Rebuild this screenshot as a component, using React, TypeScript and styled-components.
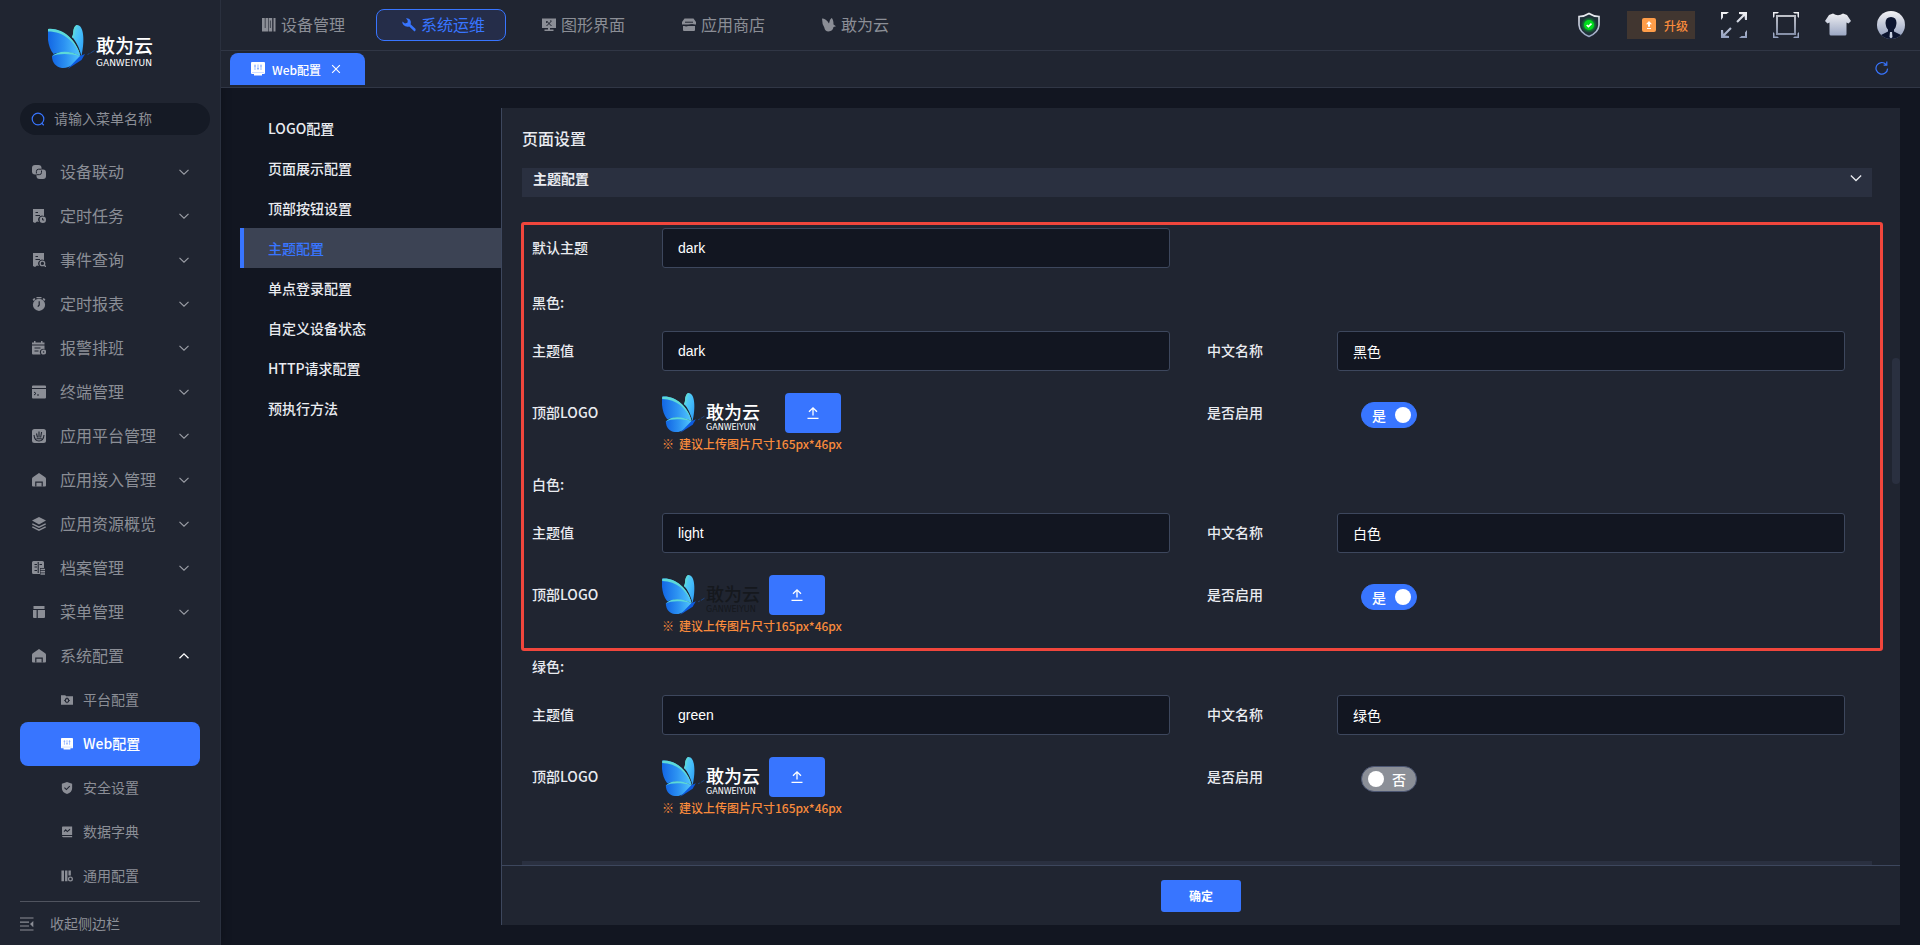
import React, { useId, useState } from 'react';
import styled, { createGlobalStyle } from 'styled-components';

const c = {
  bg: '#121621',
  panel: '#202531',
  line: '#303645',
  edge: '#3d475d',
  bar: '#2a3040',
  blue: '#3875ff',
  muted: '#8b8e96',
  text: '#e9ebf0',
  orange: '#f98b3c',
  red: '#f0463c',
};

const Global = createGlobalStyle`
  *, *::before, *::after { box-sizing: border-box; }
  body {
    margin: 0;
    background: ${c.bg};
    color: ${c.text};
    font-family: "Noto Sans CJK SC", "Noto Sans", sans-serif;
    font-size: 14px;
  }
  button, input { font: inherit; color: inherit; }
  button { border: 0; padding: 0; background: none; cursor: pointer; }
  a { color: inherit; text-decoration: none; }
  svg { display: block; flex: none; }
`;

/* ---------- icons ---------- */

const shapes: Record<string, React.ReactNode> = {
  link: (
    <>
      <rect x="0" y="0" width="9.5" height="9.5" rx="3" fill="currentColor" />
      <rect x="4.5" y="4.5" width="9.5" height="9.5" rx="3" fill="currentColor" />
      <path d="M9.5 4.200H6.600Q4.400 4.200 4.400 6.400V8.500M4.600 9.700H7.300Q9.500 9.700 9.500 7.500V5.500" fill="none" stroke={c.panel} strokeWidth="1" />
    </>
  ),
  task: (
    <>
      <path d="M1 0H12V7A4 4 0 0 0 7 13L5 12.4 3 14 1 13Z" fill="currentColor" />
      <path d="M3.5 3.5H6M3.5 6.5H8" stroke={c.panel} strokeWidth="1.1" />
      <circle cx="10.8" cy="10.8" r="3.2" fill="currentColor" />
      <path d="M10.6 9V11H12.2" fill="none" stroke={c.panel} />
    </>
  ),
  query: (
    <>
      <path d="M1 0H12V7A4 4 0 0 0 7 13L5 12.4 3 14 1 13Z" fill="currentColor" />
      <path d="M3.5 3.5H6M3.5 6.5H8" stroke={c.panel} strokeWidth="1.1" />
      <circle cx="10.4" cy="10.4" r="2.3" fill={c.panel} stroke="currentColor" strokeWidth="1.3" />
      <path d="M12 12L14 14" stroke="currentColor" strokeWidth="1.3" />
    </>
  ),
  timer: (
    <>
      <path d="M4.5 0H9.5V1.3H4.5ZM.6 2.6L2.2 1 3.6 2 1.6 4ZM13.4 2.6L11.8 1 10.4 2 12.4 4Z" fill="currentColor" />
      <circle cx="7" cy="7.8" r="6.1" fill="currentColor" />
      <path d="M7.2 4.3V8L5.8 9.6" fill="none" stroke={c.panel} strokeWidth="1.2" />
    </>
  ),
  shift: (
    <>
      <path d="M0 1.5H2V0H3.5V1.5H9V0H10.500V1.5H12.500V3.6H0ZM0 4.6H12.500V8A3.500 3.500 0 0 0 8.500 13.500H1Q0 13.500 0 12.500Z" fill="currentColor" />
      <path d="M2.500 7H8.500M2.500 10H6.500" stroke={c.panel} strokeWidth="1.1" />
      <circle cx="11.600" cy="11" r="2.600" fill="currentColor" />
      <circle cx="11.600" cy="11" r=".8" fill={c.panel} />
    </>
  ),
  terminal: (
    <>
      <path d="M1 .5H13Q14 .5 14 1.500V3H0V1.500Q0 .5 1 .5ZM0 4H14V12.500Q14 13.500 13 13.500H1Q0 13.500 0 12.500Z" fill="currentColor" />
      <path d="M2 7L4 8.500 2 10M5 10H7" fill="none" stroke={c.panel} />
    </>
  ),
  platform: (
    <>
      <rect width="14" height="14" rx="2.500" fill="currentColor" />
      <path d="M2 6Q2.500 12 7 12T12 6M4.500 4.500L5.500 8.500M7 2.500V8.500M9.600 3L8.600 8.500M4.500 9.800H9.800" fill="none" stroke={c.panel} strokeWidth="1.1" />
    </>
  ),
  home: (
    <>
      <path d="M7 0L13.200 4.200Q14 4.800 14 6V12.500Q14 13.500 13 13.500H1Q0 13.500 0 12.500V6Q0 4.800 .8 4.200Z" fill="currentColor" />
      <path d="M3.800 13.500V9.200H10.200V13.500" fill="none" stroke={c.panel} strokeWidth="1.200" />
    </>
  ),
  layers: (
    <>
      <path d="M7 0L14 3.600 7 7.400 0 3.600Z" fill="currentColor" />
      <path d="M.3 6.800L7 10.200 13.700 6.800M.3 9.800L7 13.200 13.700 9.800" fill="none" stroke="currentColor" strokeWidth="1.300" />
    </>
  ),
  archive: (
    <>
      <path d="M1.500 0H10.500Q12 0 12 1.500V7H8V13H1.500Q0 13 0 11.500V1.500Q0 0 1.500 0Z" fill="currentColor" />
      <path d="M2.500 3.500H5M2.500 6H5M7.500 3.500H10M6.200 1V12M2.500 9.500H5" stroke={c.panel} strokeWidth="1.100" />
      <path d="M8.500 8.500H13M8.500 10.700H13M8.500 12.900H13" stroke="currentColor" strokeWidth="1.500" />
    </>
  ),
  menu: <path d="M1.500 1H12.500V4H1.500ZM1 5H4.600V13H2Q1 13 1 12ZM5.800 5H13V12Q13 13 12 13H5.800Z" fill="currentColor" />,
  folderGear: (
    <>
      <path d="M0 1.500H5L6 2.500H14V12.500H0Z" fill="currentColor" />
      <circle cx="7" cy="7.500" r="2.100" fill="none" stroke={c.panel} strokeWidth="1.300" />
      <path d="M7 4.200V5.500M7 9.500V10.800M3.800 7.500H5M9 7.500H10.200" stroke={c.panel} strokeWidth="1.200" />
    </>
  ),
  web: (
    <>
      <path d="M1 0H13Q14 0 14 1V11Q14 12 13 12H11V13.500H3V12H1Q0 12 0 11V1Q0 0 1 0Z" fill="currentColor" />
      <path d="M4 2.500V8M7 2.500V8M10 2.500V8M3 4H5M6 6.500H8M9 4H11" stroke={c.blue} strokeWidth=".7" opacity=".7" />
      <path d="M1 10.600H13" stroke={c.blue} strokeWidth=".5" opacity=".5" />
    </>
  ),
  shield: (
    <>
      <path d="M7 0L13 2V7Q13 12 7 14 1 12 1 7V2Z" fill="currentColor" />
      <path d="M4 6.500L6.300 8.800 10.200 4.900" fill="none" stroke={c.panel} strokeWidth="1.300" />
    </>
  ),
  dict: (
    <>
      <path d="M2 .5H13V10.500H1.200V1.500Q1.200 .5 2 .5ZM1.200 11.700H13V13H2.500Q1.200 13 1.200 11.700Z" fill="currentColor" />
      <path d="M3.500 6.500L5.500 4.500 7.300 6.500 10.500 3.800" fill="none" stroke={c.panel} strokeWidth="1.200" />
    </>
  ),
  general: (
    <>
      <path d="M.5 .5H3.500V13H.5ZM4.700 .5H7.500V13H4.700ZM8.700 .5H11.500V6.500H8.700Z" fill="currentColor" />
      <circle cx="11" cy="10.500" r="2.200" fill={c.panel} stroke="currentColor" strokeWidth="1.500" />
    </>
  ),
  books: (
    <>
      <path d="M0 0H6V13.500H0ZM6.600 0H10.200V13.500H6.600ZM11.500 0H13.500V13.500H11.500Z" fill="currentColor" />
      <path d="M3.200 0V10M8.400 2.500V10" stroke={c.panel} strokeWidth=".7" />
    </>
  ),
  wrench: <path d="M4 .3Q7.800 0 8.800 3.500 9 5 8.600 6.200L13.600 11Q14 12.500 12.500 13.500L7.200 8.500Q3.800 9.300 1.500 7 .2 5.500 .3 3.500L3 5.600 5.400 4.800 5.800 2.800Z" fill="currentColor" />,
  screen: (
    <>
      <path d="M0 .5H14V10H8V11.500H11.500V13H2.500V11.500H6V10H0Z" fill="currentColor" />
      <path d="M4.500 3L9.500 8M9 3.500L4.500 8M8 3H9.500M4.500 5L5 3" stroke={c.panel} strokeWidth="1" />
    </>
  ),
  store: (
    <>
      <path d="M2.500 .5H11.500L14 4V6.500H0V4ZM1 8H13V12Q13 13 12 13H2Q1 13 1 12Z" fill="currentColor" />
      <path d="M3 4.200H11M1.500 7.300Q4 8.700 7 7.300T12.500 7.300" fill="none" stroke={c.panel} />
    </>
  ),
  bird: <path d="M0 .5Q4 .5 7 5.500 7.500 1.500 9.500 0 11.500 1 11.500 6.500L14 8.200 11.500 9Q11 13 6.500 13.500 3 13.500 2.300 9.500 0 6 0 .5Z" fill="currentColor" />,
  collapse: (
    <>
      <path d="M0 1H13.500M0 5.200H9M0 9H9M0 13H13.500" stroke="currentColor" strokeWidth="1.200" />
      <path d="M13.300 4V10.300L10 7.100Z" fill="currentColor" />
    </>
  ),
  search: (
    <>
      <circle cx="7" cy="7" r="5.800" fill="none" stroke={c.blue} strokeWidth="1.200" />
      <path d="M10.500 11L12.800 13.200" stroke={c.blue} strokeWidth="1.200" />
    </>
  ),
  down: <path d="M2.500 4.800L7 9.200 11.500 4.800" fill="none" stroke="currentColor" strokeWidth="1.100" />,
  up: <path d="M2.500 9.200L7 4.800 11.500 9.200" fill="none" stroke="currentColor" strokeWidth="1.300" />,
  close: <path d="M2.500 2.500L11.500 11.500M11.500 2.500L2.500 11.500" stroke="currentColor" strokeWidth="1.300" />,
  refresh: (
    <path d="M12.600 7.600A5.800 5.800 0 1 1 11 3.300M11.800 .6V4.200H8.600" fill="none" stroke={c.blue} strokeWidth="1.200" />
  ),
  upload: <path d="M7 9.600V2M3 5.800L7 1.800 11 5.800M1.500 12.300H12.500" fill="none" stroke="#fff" strokeWidth="1.300" />,
};

const Icon = ({ name, size = 14 }: { name: string; size?: number }) => (
  <svg width={size} height={size} viewBox="0 0 14 14" aria-hidden="true">{shapes[name]}</svg>
);

const Silver = ({ id }: { id: string }) => (
  <linearGradient id={id} x1="0" y1="0" x2="0" y2="26" gradientUnits="userSpaceOnUse">
    <stop offset="0" stopColor="#f3f3f5" />
    <stop offset="1" stopColor="#929fbe" />
  </linearGradient>
);

const ShieldStatus = () => (
  <svg width="24" height="26" viewBox="0 0 24 26">
    <defs>
      <Silver id="sv1" />
      <radialGradient id="glow"><stop offset=".5" stopColor="#00c92a" /><stop offset="1" stopColor="#00c92a" stopOpacity="0" /></radialGradient>
    </defs>
    <path d="M12 1.500Q16.500 4.500 22 4.500V13Q21.500 20.500 12 24.500 2.500 20.500 2 13V4.500Q7.500 4.500 12 1.500Z" fill="#1f3239" stroke="url(#sv1)" strokeWidth="1.600" />
    <circle cx="12" cy="13" r="8" fill="url(#glow)" opacity=".7" />
    <circle cx="12" cy="13" r="5" fill="#00dc1c" />
    <path d="M9.700 13L11.400 14.600 14.500 11.600" fill="none" stroke="#fff" strokeWidth="1.600" />
  </svg>
);

const ExpandIcon = () => (
  <svg width="26" height="26" viewBox="0 0 26 26">
    <defs><Silver id="sv2" /></defs>
    <path d="M0 0H8L5.500 2H2V5.500L0 8ZM18 0H26V8H24L23.500 4 16.800 10.700 15.300 9.200 22 2.500 18 2ZM26 18V26H18L20.500 24H24V20.500ZM0 18H2L2.500 22 9.200 15.300 10.700 16.800 4 23.500 8 24V26H0Z" fill="url(#sv2)" />
  </svg>
);

const FrameIcon = () => (
  <svg width="26" height="26" viewBox="0 0 26 26">
    <defs><Silver id="sv3" /></defs>
    <path d="M0 0H6L4.500 1.500H1.500V4.500L0 6ZM20 0H26V6L24.500 4.500V1.500H21.500ZM26 20V26H20L21.500 24.500H24.500V21.500ZM0 20L1.500 21.500V24.500H4.500L6 26H0Z" fill="url(#sv3)" />
    <path d="M4 4H22V22H4Z" fill="none" stroke="url(#sv3)" strokeWidth="2" opacity=".8" />
  </svg>
);

const ShirtIcon = () => (
  <svg width="26" height="26" viewBox="0 0 26 26">
    <defs><Silver id="sv4" /></defs>
    <path d="M8 1.500Q13 5 18 1.500L22 3 26 9 23.500 11.500 21.500 10.500V22Q21.500 23.500 20 23.500H6Q4.500 23.500 4.500 22V10.500L2.500 11.500 0 9 4 3Z" fill="url(#sv4)" />
  </svg>
);

const AvatarIcon = () => (
  <svg width="28" height="28" viewBox="0 0 28 28">
    <defs>
      <Silver id="sv5" />
      <clipPath id="round"><circle cx="14" cy="14" r="14" /></clipPath>
    </defs>
    <g clipPath="url(#round)">
      <rect width="28" height="28" fill="url(#sv5)" />
      <path d="M14 6Q19.500 6 19.500 12 19 17 17 18.500V20.500L24 24V28H4V24L11 20.500V18.500Q9 17 8.500 12 8.500 6 14 6Z" fill="#0c1530" />
      <path d="M13 21H15L15.500 26 14 27.500 12.500 26Z" fill="#c5cee0" />
    </g>
  </svg>
);

const UpgradeIcon = () => (
  <svg width="14" height="14" viewBox="0 0 14 14">
    <rect width="14" height="14" rx="2" fill="#ff9d49" />
    <path d="M7 3L10 6.300H8V8.800H6V6.300H4ZM5 10H9V11.100H5Z" fill="#fff" />
  </svg>
);

const Butterfly = ({ height }: { height: number }) => {
  const id = useId();
  return (
    <svg width={height === 44 ? 48 : 44} height={height} viewBox="0 0 48 44" aria-hidden="true">
      <defs>
        <linearGradient id={id + 'a'} x1="0" y1=".6" x2="1" y2=".6">
          <stop offset="0" stopColor="#1266e4" /><stop offset=".5" stopColor="#2c92f2" /><stop offset="1" stopColor="#52c8fd" />
        </linearGradient>
        <linearGradient id={id + 'b'} x1="0" y1="0" x2="1" y2="1">
          <stop offset="0" stopColor="#62dce4" /><stop offset=".5" stopColor="#45befb" /><stop offset="1" stopColor="#2a97f4" />
        </linearGradient>
      </defs>
      <path d="M29 0C36 0 37 16 33.500 31 31 22 28 16 24 12 26 8 25 1 29 0Z" fill={`url(#${id}b)`} />
      <path d="M29 .5Q25.500 3 26 8 26 10.500 24.500 12.500" fill="none" stroke="#5cd9d8" strokeWidth="1.500" />
      <path d="M0 4C14 3 28 14 32.500 31 22 26 12 27 5.500 29 0 22 -1 12 0 4Z" fill={`url(#${id}a)`} />
      <path d="M0 4C14 2.500 28 14 32.500 31 27 17 16 6.500 0 6.500Z" fill="#5cd9d8" />
      <path d="M4 31C10 26 22 26 32.500 31 28 38 22 43.500 14 43 8 42 4 38 4 31Z" fill={`url(#${id}a)`} />
      <path d="M4 31.500C10 25 22 25.500 32.500 31 22 28.500 10 28 4 31.500Z" fill="#5cd9d8" />
      <path d="M19.500 44L32 31 37 29 33.500 35Z" fill="#0d5be0" />
      <path d="M39.500 29.500L41.500 28.500M42.500 28L46.500 25.500" stroke="#1b4f9f" strokeWidth=".8" />
    </svg>
  );
};

/* ---------- brand ---------- */

const BrandBox = styled.div<{ $large?: boolean; $wide?: boolean; $ink: string }>`
  display: flex;
  color: ${(p) => p.$ink};
  width: ${(p) => (p.$large ? 'auto' : p.$wide ? '123px' : '107px')};
`;
const BrandWords = styled.div<{ $large?: boolean }>`
  display: flex;
  flex-direction: column;
  padding-top: ${(p) => (p.$large ? 11 : 10)}px;
  white-space: nowrap;
`;
const BrandName = styled.span<{ $large?: boolean }>`
  font-family: "Liberation Sans", "Noto Sans CJK SC", sans-serif;
  font-size: ${(p) => (p.$large ? 19 : 18)}px;
  line-height: ${(p) => (p.$large ? 22 : 20)}px;
  font-weight: 500;
`;
const BrandLatin = styled.span<{ $large?: boolean }>`
  font-family: "DejaVu Sans", sans-serif;
  font-size: ${(p) => (p.$large ? 9 : 8)}px;
  line-height: 10px;
`;
const Brand = ({ large, wide, ink = '#fff' }: { large?: boolean; wide?: boolean; ink?: string }) => (
  <BrandBox $large={large} $wide={wide} $ink={ink}>
    <Butterfly height={large ? 44 : 40} />
    <BrandWords $large={large}>
      <BrandName $large={large}>敢为云</BrandName>
      <BrandLatin $large={large}>GANWEIYUN</BrandLatin>
    </BrandWords>
  </BrandBox>
);

/* ---------- shell ---------- */

const Shell = styled.div`
  display: flex;
  height: 100vh;
  overflow: hidden;
`;
const Sidebar = styled.aside`
  flex: none;
  width: 221px;
  display: flex;
  flex-direction: column;
  background: ${c.panel};
  border-right: 1px solid #2a303e;
  box-shadow: 0 0 10px rgba(0, 0, 0, 0.25);
`;
const BrandArea = styled.div`
  padding: 25px 0 34px 48px;
`;
const Search = styled.label`
  display: flex;
  align-items: center;
  gap: 9px;
  height: 32px;
  margin: 0 10px 15px 20px;
  padding: 0 11px;
  border-radius: 16px;
  background: #151a25;
`;
const SearchInput = styled.input`
  flex: 1;
  min-width: 0;
  border: 0;
  outline: 0;
  padding: 0 0 2px;
  background: none;
  &::placeholder { color: ${c.muted}; opacity: 1; }
`;
const Menu = styled.nav`
  flex: 1;
  min-height: 0;
  overflow: hidden;
  padding: 0 20px;
`;
const ItemText = styled.span`
  padding-bottom: 2px;
`;
const MenuItem = styled.button<{ $open?: boolean }>`
  display: flex;
  align-items: center;
  gap: 14px;
  width: 100%;
  height: 44px;
  padding: 0 9px 0 12px;
  color: ${c.muted};
  font-size: 16px;
  text-align: left;
  & > svg:last-child { margin-left: auto; color: ${(p) => (p.$open ? '#fff' : '#9da0a8')}; }
`;
const SubItem = styled.a<{ $active?: boolean }>`
  display: flex;
  align-items: center;
  gap: 10px;
  height: 44px;
  padding-left: 41px;
  border-radius: 8px;
  color: ${(p) => (p.$active ? '#fff' : c.muted)};
  background: ${(p) => (p.$active ? c.blue : 'transparent')};
  font-weight: ${(p) => (p.$active ? 500 : 400)};
`;
const Collapse = styled.button`
  display: flex;
  align-items: center;
  gap: 16px;
  height: 44px;
  margin: 0 20px;
  border-top: 1px solid #50545f;
  color: ${c.muted};
`;

const Main = styled.div`
  flex: 1;
  min-width: 0;
  display: flex;
  flex-direction: column;
`;
const TopBar = styled.header`
  display: flex;
  align-items: center;
  justify-content: space-between;
  height: 51px;
  padding: 0 15px;
  background: ${c.panel};
  border-bottom: 1px solid ${c.line};
`;
const TopNav = styled.nav`
  display: flex;
  gap: 10px;
`;
const TopLink = styled.a<{ $active?: boolean }>`
  display: flex;
  align-items: center;
  gap: 5px;
  height: 32px;
  padding: 0 20px 0 25px;
  border: 1px solid ${(p) => (p.$active ? c.blue : 'transparent')};
  border-radius: 8px;
  background: ${(p) => (p.$active ? '#252d49' : 'transparent')};
  color: ${(p) => (p.$active ? c.blue : c.muted)};
  font-size: 16px;
`;
const Tools = styled.div`
  display: flex;
  align-items: center;
  gap: 26px;
`;
const ToolButton = styled.button`
  display: block;
`;
const Upgrade = styled.button`
  display: flex;
  align-items: center;
  gap: 8px;
  height: 28px;
  padding: 0 7px 0 15px;
  background: #413630;
  color: ${c.orange};
  font-size: 12px;
  font-weight: 500;
`;
const TabBar = styled.div`
  display: flex;
  align-items: center;
  justify-content: space-between;
  height: 37px;
  padding: 0 31px 2px 9px;
  background: ${c.panel};
  border-bottom: 1px solid ${c.line};
`;
const Tab = styled.div`
  display: flex;
  align-items: center;
  align-self: flex-end;
  width: 135px;
  height: 32px;
  padding: 0 23px 0 21px;
  border-radius: 8px 8px 0 0;
  background: ${c.blue};
  color: #fff;
  font-size: 12px;
  font-weight: 500;
`;
const TabTitle = styled.span`
  margin: 0 auto 0 7px;
`;

const Workspace = styled.main`
  flex: 1;
  min-height: 0;
  display: flex;
  padding: 20px 20px 20px 19px;
`;
const SectionNav = styled.nav`
  flex: none;
  width: 261px;
`;
const SectionLink = styled.a<{ $active?: boolean }>`
  display: block;
  height: 40px;
  line-height: 40px;
  padding-left: 24px;
  border-left: 4px solid ${(p) => (p.$active ? c.blue : 'transparent')};
  background: ${(p) => (p.$active ? '#3c4354' : 'transparent')};
  color: ${(p) => (p.$active ? c.blue : c.text)};
  font-weight: 500;
`;
const Panel = styled.section`
  flex: 1;
  min-width: 0;
  display: flex;
  flex-direction: column;
  background: ${c.panel};
  border-left: 1px solid ${c.edge};
`;
const PanelTitle = styled.h1`
  margin: 0;
  padding: 18px 20px;
  font-size: 16px;
  line-height: 24px;
  font-weight: 500;
`;
const Scroll = styled.div`
  position: relative;
  flex: 1;
  min-height: 0;
  overflow: hidden;
  padding: 0 28px 0 20px;
`;
const ScrollThumb = styled.i`
  position: absolute;
  top: 190px;
  right: 0;
  width: 8px;
  height: 126px;
  border-radius: 4px;
  background: ${c.bar};
`;
const Accordion = styled.button<{ $next?: boolean }>`
  display: flex;
  justify-content: space-between;
  align-items: flex-start;
  width: 100%;
  height: 29px;
  margin-top: ${(p) => (p.$next ? 40 : 0)}px;
  padding: 0 8px 0 11px;
  background: ${c.bar};
  font-weight: 700;
  line-height: 20px;
  & > svg { margin-top: 2px; }
`;
const Highlight = styled.div`
  position: relative;
  margin-top: 31px;
  &::after {
    content: '';
    position: absolute;
    inset: -6px -11px -12px -1px;
    border: 3px solid ${c.red};
    border-radius: 3px;
    pointer-events: none;
  }
`;
const Row = styled.div<{ $gap?: number }>`
  display: grid;
  grid-template-columns: 1fr 1fr;
  margin-bottom: ${(p) => p.$gap ?? 0}px;
`;
const Field = styled.div`
  display: grid;
  grid-template-columns: 130px 1fr;
  align-items: start;
  padding: 0 27px 0 10px;
`;
const Label = styled.label`
  font-weight: 500;
  line-height: 38px;
`;
const TextBox = styled.input`
  width: 100%;
  height: 40px;
  padding: 0 15px;
  border: 1px solid ${c.edge};
  border-radius: 3px;
  outline: 0;
  background: ${c.bg};
  color: #fff;
  font-family: "Liberation Sans", "Noto Sans CJK SC", sans-serif;
`;
const Group = styled.section`
  padding-top: 16px;
`;
const GroupTitle = styled.h2`
  margin: 0 0 18px;
  padding-left: 10px;
  font-size: 14px;
  line-height: 22px;
  font-weight: 500;
`;
const UploadLine = styled.div`
  display: flex;
`;
const UploadButton = styled.button`
  display: flex;
  align-items: center;
  justify-content: center;
  width: 56px;
  height: 40px;
  border-radius: 4px;
  background: ${c.blue};
`;
const Hint = styled.p`
  margin: 0;
  padding-bottom: 2px;
  color: ${c.orange};
  font-size: 12px;
  line-height: 22px;
  font-weight: 500;
`;
const HintMark = styled.span`
  margin-right: 5px;
`;
const SwitchBox = styled.span<{ $on: boolean }>`
  position: relative;
  display: flex;
  flex-direction: ${(p) => (p.$on ? 'row' : 'row-reverse')};
  align-items: center;
  justify-content: space-between;
  width: 56px;
  height: 26px;
  margin: 9px 0 0 24px;
  padding: ${(p) => (p.$on ? '0 5px 0 10px' : '0 10px 0 6px')};
  border: 1px solid ${(p) => (p.$on ? c.blue : '#4c5672')};
  border-radius: 13px;
  background: ${(p) => (p.$on ? c.blue : '#8b8f97')};
  color: #fff;
  font-weight: 500;
  line-height: 24px;
`;
const SwitchInput = styled.input`
  position: absolute;
  inset: 0;
  width: 100%;
  height: 100%;
  margin: 0;
  opacity: 0;
  cursor: pointer;
`;
const Knob = styled.i`
  width: 16px;
  height: 16px;
  border-radius: 50%;
  background: #fff;
`;
const Footer = styled.footer`
  display: flex;
  justify-content: center;
  padding: 14px 0 13px;
  border-top: 1px solid ${c.edge};
`;
const Confirm = styled.button`
  width: 80px;
  height: 32px;
  padding-bottom: 2px;
  border-radius: 3px;
  background: ${c.blue};
  color: #fff;
  font-size: 12px;
  font-weight: 700;
`;

/* ---------- content ---------- */

const menu = [
  ['link', '设备联动'], ['task', '定时任务'], ['query', '事件查询'], ['timer', '定时报表'],
  ['shift', '报警排班'], ['terminal', '终端管理'], ['platform', '应用平台管理'], ['home', '应用接入管理'],
  ['layers', '应用资源概览'], ['archive', '档案管理'], ['menu', '菜单管理'], ['home', '系统配置'],
];
const subMenu = [
  ['folderGear', '平台配置'], ['web', 'Web配置'], ['shield', '安全设置'], ['dict', '数据字典'], ['general', '通用配置'],
];
const topNav = [
  ['books', '设备管理'], ['wrench', '系统运维'], ['screen', '图形界面'], ['store', '应用商店'], ['bird', '敢为云'],
];
const sections = ['LOGO配置', '页面展示配置', '顶部按钮设置', '主题配置', '单点登录配置', '自定义设备状态', 'HTTP请求配置', '预执行方法'];

const ThemeGroup = ({ value, name, ink, wide, enabled }: { value: string; name: string; ink?: string; wide?: boolean; enabled: boolean }) => {
  const [on, setOn] = useState(enabled);
  return (
    <Group>
      <GroupTitle>{name}:</GroupTitle>
      <Row $gap={22}>
        <Field>
          <Label htmlFor={`${value}-value`}>主题值</Label>
          <TextBox id={`${value}-value`} defaultValue={value} />
        </Field>
        <Field>
          <Label htmlFor={`${value}-name`}>中文名称</Label>
          <TextBox id={`${value}-name`} defaultValue={name} />
        </Field>
      </Row>
      <Row>
        <Field>
          <Label htmlFor={`${value}-logo`}>顶部LOGO</Label>
          <div>
            <UploadLine>
              <Brand ink={ink} wide={wide} />
              <UploadButton id={`${value}-logo`} type="button"><Icon name="upload" /></UploadButton>
            </UploadLine>
            <Hint><HintMark>※</HintMark>建议上传图片尺寸165px*46px</Hint>
          </div>
        </Field>
        <Field>
          <Label htmlFor={`${value}-on`}>是否启用</Label>
          <SwitchBox $on={on}>
            <span>{on ? '是' : '否'}</span>
            <Knob />
            <SwitchInput id={`${value}-on`} type="checkbox" role="switch" checked={on} onChange={() => setOn(!on)} />
          </SwitchBox>
        </Field>
      </Row>
    </Group>
  );
};

export default function App() {
  return (
    <Shell>
      <Global />
      <Sidebar>
        <BrandArea><Brand large /></BrandArea>
        <Search>
          <Icon name="search" />
          <SearchInput placeholder="请输入菜单名称" />
        </Search>
        <Menu>
          {menu.map(([icon, text]) => {
            const open = text === '系统配置';
            return (
              <MenuItem key={text} $open={open} aria-expanded={open}>
                <Icon name={icon} />
                <ItemText>{text}</ItemText>
                <Icon name={open ? 'up' : 'down'} />
              </MenuItem>
            );
          })}
          {subMenu.map(([icon, text]) => (
            <SubItem key={text} href="#" $active={icon === 'web'}>
              <Icon name={icon} size={12} />
              <ItemText>{text}</ItemText>
            </SubItem>
          ))}
        </Menu>
        <Collapse><Icon name="collapse" /><ItemText>收起侧边栏</ItemText></Collapse>
      </Sidebar>
      <Main>
        <TopBar>
          <TopNav>
            {topNav.map(([icon, text]) => (
              <TopLink key={text} href="#" $active={icon === 'wrench'}>
                <Icon name={icon} />
                <ItemText>{text}</ItemText>
              </TopLink>
            ))}
          </TopNav>
          <Tools>
            <ToolButton aria-label="安全状态"><ShieldStatus /></ToolButton>
            <Upgrade><UpgradeIcon />升级</Upgrade>
            <ToolButton aria-label="全屏"><ExpandIcon /></ToolButton>
            <ToolButton aria-label="窗口"><FrameIcon /></ToolButton>
            <ToolButton aria-label="换肤"><ShirtIcon /></ToolButton>
            <ToolButton aria-label="用户"><AvatarIcon /></ToolButton>
          </Tools>
        </TopBar>
        <TabBar>
          <Tab>
            <Icon name="web" />
            <TabTitle><ItemText>Web配置</ItemText></TabTitle>
            <ToolButton aria-label="关闭"><Icon name="close" size={12} /></ToolButton>
          </Tab>
          <ToolButton aria-label="刷新"><Icon name="refresh" /></ToolButton>
        </TabBar>
        <Workspace>
          <SectionNav>
            {sections.map((s) => (
              <SectionLink key={s} href="#" $active={s === '主题配置'}>{s}</SectionLink>
            ))}
          </SectionNav>
          <Panel>
            <PanelTitle>页面设置</PanelTitle>
            <Scroll>
              <Accordion aria-expanded="true">主题配置<Icon name="down" size={16} /></Accordion>
              <Highlight>
                <Row $gap={7}>
                  <Field>
                    <Label htmlFor="default-theme">默认主题</Label>
                    <TextBox id="default-theme" defaultValue="dark" />
                  </Field>
                </Row>
                <ThemeGroup value="dark" name="黑色" wide enabled />
                <ThemeGroup value="light" name="白色" ink="#15181d" enabled />
              </Highlight>
              <ThemeGroup value="green" name="绿色" enabled={false} />
              <Accordion $next aria-label="下一项" />
              <ScrollThumb />
            </Scroll>
            <Footer><Confirm>确定</Confirm></Footer>
          </Panel>
        </Workspace>
      </Main>
    </Shell>
  );
}
